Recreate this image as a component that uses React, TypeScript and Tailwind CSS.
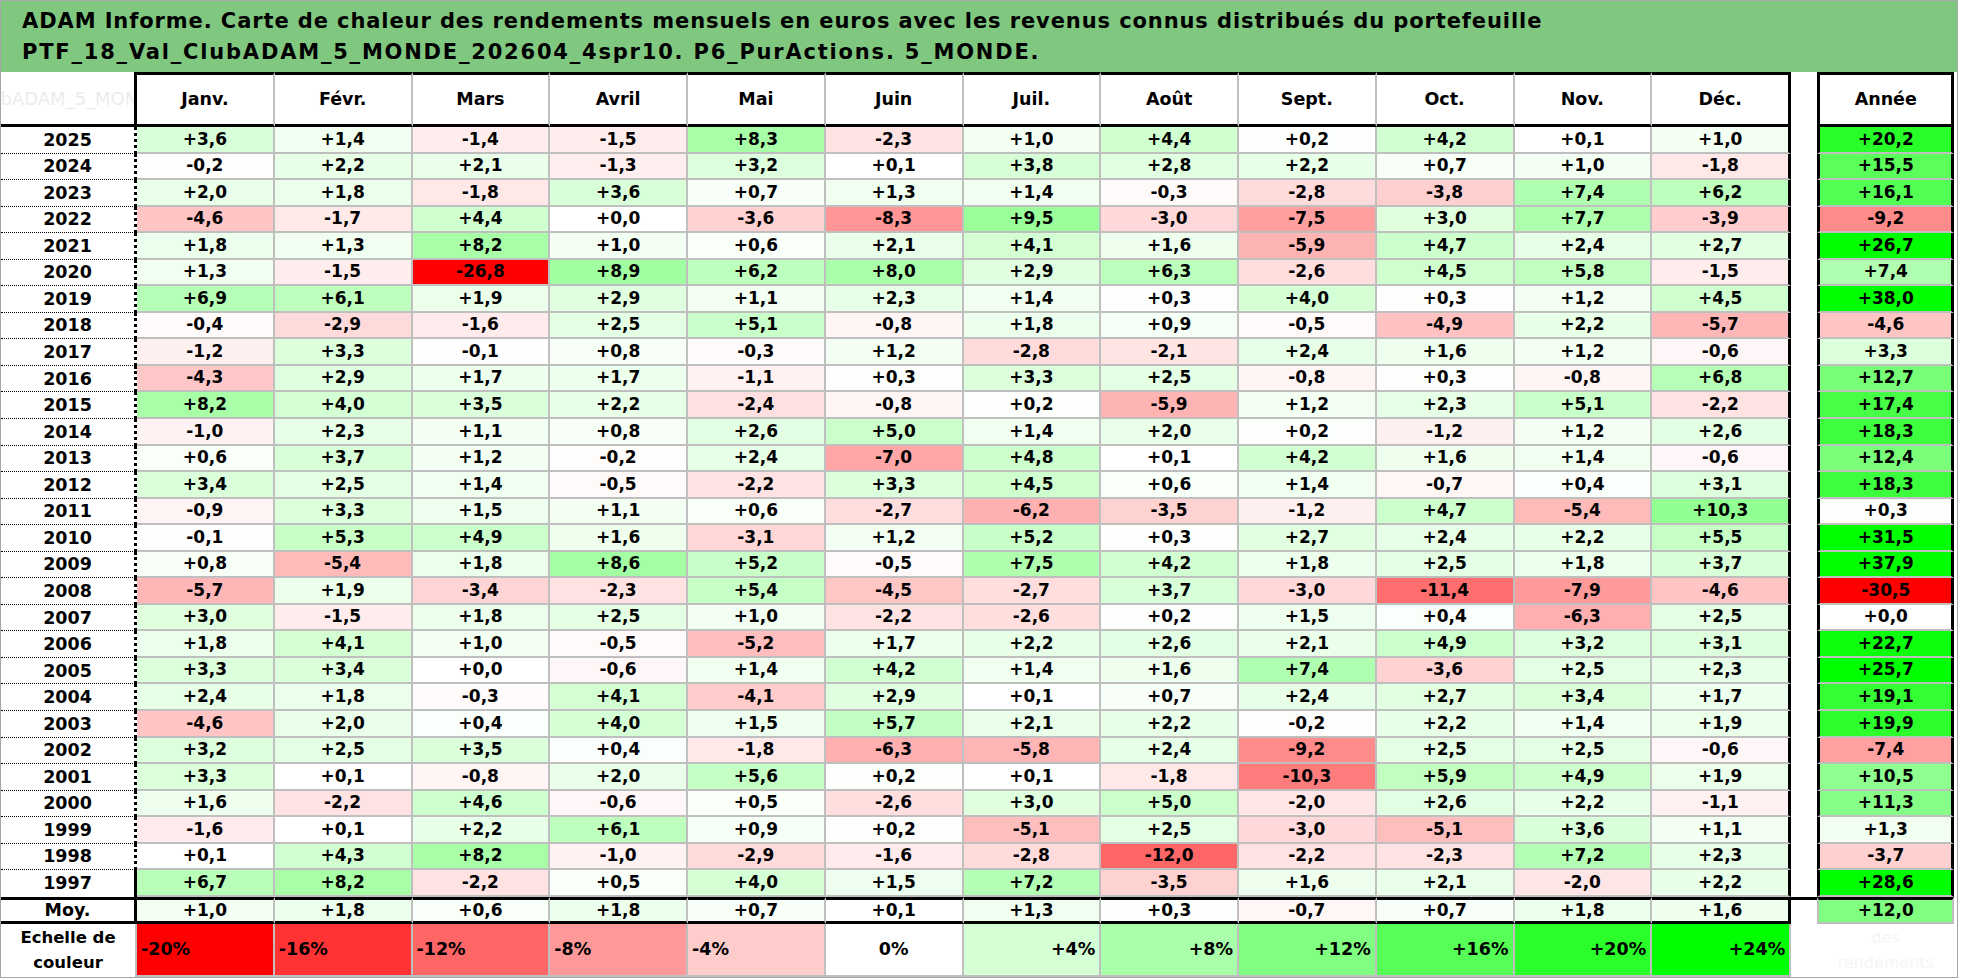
import React from "react";

const MONTHS = ["Janv.", "Févr.", "Mars", "Avril", "Mai", "Juin", "Juil.", "Août", "Sept.", "Oct.", "Nov.", "Déc."];

const ROWS = [
  "2025 +3,6 +1,4 -1,4 -1,5 +8,3 -2,3 +1,0 +4,4 +0,2 +4,2 +0,1 +1,0 +20,2",
  "2024 -0,2 +2,2 +2,1 -1,3 +3,2 +0,1 +3,8 +2,8 +2,2 +0,7 +1,0 -1,8 +15,5",
  "2023 +2,0 +1,8 -1,8 +3,6 +0,7 +1,3 +1,4 -0,3 -2,8 -3,8 +7,4 +6,2 +16,1",
  "2022 -4,6 -1,7 +4,4 +0,0 -3,6 -8,3 +9,5 -3,0 -7,5 +3,0 +7,7 -3,9 -9,2",
  "2021 +1,8 +1,3 +8,2 +1,0 +0,6 +2,1 +4,1 +1,6 -5,9 +4,7 +2,4 +2,7 +26,7",
  "2020 +1,3 -1,5 -26,8 +8,9 +6,2 +8,0 +2,9 +6,3 -2,6 +4,5 +5,8 -1,5 +7,4",
  "2019 +6,9 +6,1 +1,9 +2,9 +1,1 +2,3 +1,4 +0,3 +4,0 +0,3 +1,2 +4,5 +38,0",
  "2018 -0,4 -2,9 -1,6 +2,5 +5,1 -0,8 +1,8 +0,9 -0,5 -4,9 +2,2 -5,7 -4,6",
  "2017 -1,2 +3,3 -0,1 +0,8 -0,3 +1,2 -2,8 -2,1 +2,4 +1,6 +1,2 -0,6 +3,3",
  "2016 -4,3 +2,9 +1,7 +1,7 -1,1 +0,3 +3,3 +2,5 -0,8 +0,3 -0,8 +6,8 +12,7",
  "2015 +8,2 +4,0 +3,5 +2,2 -2,4 -0,8 +0,2 -5,9 +1,2 +2,3 +5,1 -2,2 +17,4",
  "2014 -1,0 +2,3 +1,1 +0,8 +2,6 +5,0 +1,4 +2,0 +0,2 -1,2 +1,2 +2,6 +18,3",
  "2013 +0,6 +3,7 +1,2 -0,2 +2,4 -7,0 +4,8 +0,1 +4,2 +1,6 +1,4 -0,6 +12,4",
  "2012 +3,4 +2,5 +1,4 -0,5 -2,2 +3,3 +4,5 +0,6 +1,4 -0,7 +0,4 +3,1 +18,3",
  "2011 -0,9 +3,3 +1,5 +1,1 +0,6 -2,7 -6,2 -3,5 -1,2 +4,7 -5,4 +10,3 +0,3",
  "2010 -0,1 +5,3 +4,9 +1,6 -3,1 +1,2 +5,2 +0,3 +2,7 +2,4 +2,2 +5,5 +31,5",
  "2009 +0,8 -5,4 +1,8 +8,6 +5,2 -0,5 +7,5 +4,2 +1,8 +2,5 +1,8 +3,7 +37,9",
  "2008 -5,7 +1,9 -3,4 -2,3 +5,4 -4,5 -2,7 +3,7 -3,0 -11,4 -7,9 -4,6 -30,5",
  "2007 +3,0 -1,5 +1,8 +2,5 +1,0 -2,2 -2,6 +0,2 +1,5 +0,4 -6,3 +2,5 +0,0",
  "2006 +1,8 +4,1 +1,0 -0,5 -5,2 +1,7 +2,2 +2,6 +2,1 +4,9 +3,2 +3,1 +22,7",
  "2005 +3,3 +3,4 +0,0 -0,6 +1,4 +4,2 +1,4 +1,6 +7,4 -3,6 +2,5 +2,3 +25,7",
  "2004 +2,4 +1,8 -0,3 +4,1 -4,1 +2,9 +0,1 +0,7 +2,4 +2,7 +3,4 +1,7 +19,1",
  "2003 -4,6 +2,0 +0,4 +4,0 +1,5 +5,7 +2,1 +2,2 -0,2 +2,2 +1,4 +1,9 +19,9",
  "2002 +3,2 +2,5 +3,5 +0,4 -1,8 -6,3 -5,8 +2,4 -9,2 +2,5 +2,5 -0,6 -7,4",
  "2001 +3,3 +0,1 -0,8 +2,0 +5,6 +0,2 +0,1 -1,8 -10,3 +5,9 +4,9 +1,9 +10,5",
  "2000 +1,6 -2,2 +4,6 -0,6 +0,5 -2,6 +3,0 +5,0 -2,0 +2,6 +2,2 -1,1 +11,3",
  "1999 -1,6 +0,1 +2,2 +6,1 +0,9 +0,2 -5,1 +2,5 -3,0 -5,1 +3,6 +1,1 +1,3",
  "1998 +0,1 +4,3 +8,2 -1,0 -2,9 -1,6 -2,8 -12,0 -2,2 -2,3 +7,2 +2,3 -3,7",
  "1997 +6,7 +8,2 -2,2 +0,5 +4,0 +1,5 +7,2 -3,5 +1,6 +2,1 -2,0 +2,2 +28,6",
].map((r) => r.split(" "));

const MOY = "+1,0 +1,8 +0,6 +1,8 +0,7 +0,1 +1,3 +0,3 -0,7 +0,7 +1,8 +1,6 +12,0".split(" ");

const SCALE = ["-20%", "-16%", "-12%", "-8%", "-4%", "0%", "+4%", "+8%", "+12%", "+16%", "+20%", "+24%"];

// red at -20, white at 0, green at +24
const heat = (s: string) => {
  const v = parseFloat(s.replace(",", ".").replace("%", ""));
  if (v < 0) {
    const c = Math.round(255 * Math.max(0, 1 + v / 20));
    return `rgb(255,${c},${c})`;
  }
  const c = Math.round(255 * Math.max(0, 1 - v / 24));
  return `rgb(${c},255,${c})`;
};

const App = () => {
  return (
    <div className="w-[1961px] h-[979px] bg-white font-['DejaVu_Sans',sans-serif] text-black overflow-hidden">
      <div className="w-[1958px] border border-[#a6a6a6]">
        {/* title */}
        <div className="h-[71px] bg-[#80c880] pl-[21px] pt-[5px] text-[21px] font-bold leading-[31px]">
          <div className="tracking-[0.9px]">ADAM Informe. Carte de chaleur des rendements mensuels en euros avec les revenus connus distribués du portefeuille</div>
          <div className="tracking-[1.8px]">PTF_18_Val_ClubADAM_5_MONDE_202604_4spr10. P6_PurActions. 5_MONDE.</div>
        </div>

        {/* header */}
        <div className="flex h-[55px]">
          <div className="w-[136px] flex items-center justify-center overflow-hidden border-r-[3px] border-b-[3px] border-black">
            <span className="whitespace-nowrap text-[18px] text-[#ececec]">ClubADAM_5_MONDE</span>
          </div>
          {MONTHS.map((m, i) => (
            <div
              key={m}
              className={`flex items-center justify-center border-t-[3px] border-b-[3px] border-black text-[17.5px] font-bold ${
                i === 11 ? "w-[139px] border-r-[3px]" : "w-[137.75px] border-r-2 border-r-[#bfbfbf]"
              }`}
            >
              {m}
            </div>
          ))}
          <div className="w-[26px]" />
          <div className="w-[137px] flex items-center justify-center border-[3px] border-black text-[17.5px] font-bold">Année</div>
        </div>

        {/* years */}
        {ROWS.map((r, ri) => (
          <div key={r[0]} className="flex h-[26.55px]">
            <div
              className={`w-[136px] flex items-center justify-center border-r-[3px] border-black text-[17.5px] font-bold ${
                ri < ROWS.length - 1 ? "border-b border-b-black border-dotted" : ""
              }`}
            >
              <span>{r[0]}</span>
            </div>
            {r.slice(1, 13).map((v, i) => (
              <div
                key={i}
                style={{ backgroundColor: heat(v) }}
                className={`flex items-center justify-center border-b-2 border-b-[#bfbfbf] text-[17px] font-bold ${
                  i === 11 ? "w-[139px] border-r-[3px] border-r-black" : "w-[137.75px] border-r-2 border-r-[#bfbfbf]"
                }`}
              >
                {v}
              </div>
            ))}
            <div className="w-[26px]" />
            <div
              style={{ backgroundColor: heat(r[13]) }}
              className="w-[137px] flex items-center justify-center border-x-[3px] border-x-black border-b-2 border-b-[#bfbfbf] text-[17px] font-bold"
            >
              {r[13]}
            </div>
          </div>
        ))}

        {/* average */}
        <div className="flex h-[27px]">
          <div className="w-[136px] flex items-center justify-center border-y-[3px] border-r-[3px] border-black text-[17.5px] font-bold">Moy.</div>
          {MOY.slice(0, 12).map((v, i) => (
            <div
              key={i}
              style={{ backgroundColor: heat(v) }}
              className={`flex items-center justify-center border-y-[3px] border-y-black text-[17px] font-bold ${
                i === 11 ? "w-[139px] border-r-[3px] border-r-black" : "w-[137.75px] border-r-2 border-r-[#bfbfbf]"
              }`}
            >
              {v}
            </div>
          ))}
          <div className="w-[26px] border-t-[3px] border-black" />
          <div
            style={{ backgroundColor: heat(MOY[12]) }}
            className="w-[137px] flex items-center justify-center border-t-[3px] border-t-black border-x-2 border-x-[#bfbfbf] border-b-2 border-b-[#bfbfbf] text-[17px] font-bold"
          >
            {MOY[12]}
          </div>
        </div>

        {/* colour scale */}
        <div className="flex h-[53px]">
          <div className="w-[136px] flex flex-col items-center justify-center border-r-2 border-[#bfbfbf] text-[16.5px] font-bold leading-[25px]">
            <span>Echelle de</span>
            <span>couleur</span>
          </div>
          {SCALE.map((s, i) => (
            <div
              key={s}
              style={{ backgroundColor: heat(s) }}
              className={`flex items-center border-r-2 border-b-2 border-[#bfbfbf] text-[17.5px] font-bold px-[4px] ${
                i === 11 ? "w-[139px]" : "w-[137.75px]"
              } ${i < 5 ? "justify-start" : i === 5 ? "justify-center" : "justify-end"}`}
            >
              {s}
            </div>
          ))}
          <div className="w-[26px]" />
          <div className="w-[137px] flex flex-col items-center justify-center text-[16px] leading-[25px] text-[#f5f5f5]">
            <span>des</span>
            <span>rendements</span>
          </div>
        </div>
      </div>
    </div>
  );
};

export default App;
